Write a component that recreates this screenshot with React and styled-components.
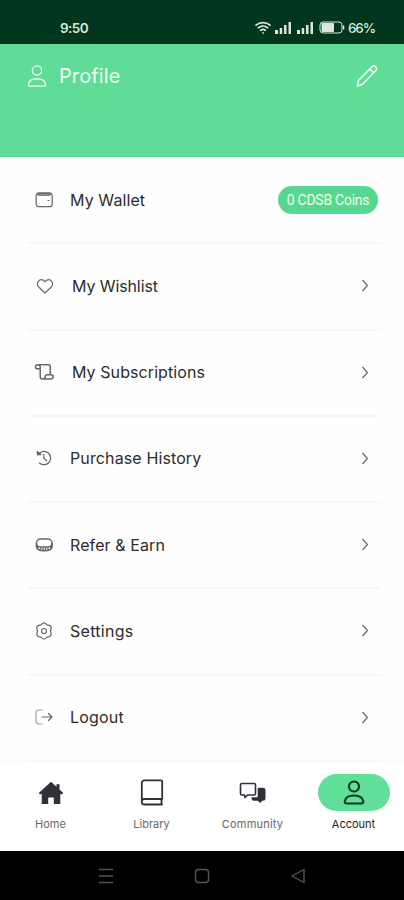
import styled, { createGlobalStyle } from "styled-components";

const GlobalStyle = createGlobalStyle`
    * {
        box-sizing: border-box;
    }

    body {
        margin: 0;
        background: #fefefe;
        font-family: Inter, "Open Sans", sans-serif;
        color: #222;
    }
`;

const Screen = styled.div`
    display: flex;
    flex-direction: column;
    width: 404px;
    height: 900px;
    overflow: hidden;
    background: #fefefe;
`;

const StatusBar = styled.div`
    display: flex;
    align-items: center;
    justify-content: space-between;
    flex: none;
    height: 44px;
    padding: 12px 30px 0 60px;
    background: #00361d;
    border-bottom: 1px solid #073518;
    color: #d9e8dc;
    line-height: 18px;
`;

const Clock = styled.span`
    font-weight: 600;
    font-size: 13.5px;
    letter-spacing: -0.6px;
`;

const StatusIcons = styled.div`
    display: flex;
    align-items: center;
`;

const Signals = styled.div`
    display: flex;
    gap: 5px;
    margin: 0 5px 0 4px;
`;

const Battery = styled.span`
    font-weight: 500;
    font-size: 13.5px;
    letter-spacing: -1.1px;
    margin: 0 -1px 0 3px;
`;

const Header = styled.header`
    display: flex;
    align-items: flex-start;
    flex: none;
    height: 113px;
    padding: 20px 26px 0 26px;
    background: #5fdd97;
    border-bottom: 1px solid #58d58f;
    color: #effff3;
`;

const HeaderTitle = styled.h1`
    flex: 1;
    margin: 0 0 0 11px;
    font-size: 20px;
    font-weight: 400;
    line-height: 25px;
    letter-spacing: 0.1px;
`;

const Menu = styled.ul`
    flex: none;
    height: 603.75px;
    margin: 0 23px 0 28px;
    padding: 0;
    list-style: none;
`;

const MenuRow = styled.li`
    display: flex;
    align-items: center;
    height: 86.25px;
    padding: 0 3px 1px 6px;
    box-shadow: 0 1px #f7f7f7, inset 0 -1px #f7f7f7;
    color: #666;
`;

const MenuLabel = styled.span`
    flex: 1;
    margin-left: ${({ $indent }) => $indent || "16px"};
    font-size: 16px;
    line-height: 24px;
    color: #2c2c2c;
    letter-spacing: ${({ $track }) => $track || "0"};
`;

const Coins = styled.span`
    height: 28px;
    width: 100px;
    border-radius: 14px;
    background: #58d790;
    color: #efffea;
    font-family: Roboto, sans-serif;
    font-size: 14px;
    line-height: 29px;
    letter-spacing: -0.25px;
    text-align: center;
    white-space: nowrap;
`;

const Chevron = styled.svg`
    width: 8px;
    height: 13px;
    margin-right: 9px;
`;

const TabBar = styled.nav`
    display: grid;
    grid-template-columns: repeat(4, 1fr);
    flex: none;
    height: 90.25px;
    padding-top: 12.5px;
    background: #fff;
    border-top: 1px solid #f6f6f6;
`;

const Tab = styled.div`
    display: flex;
    flex-direction: column;
    align-items: center;
`;

const TabIcon = styled.div`
    display: flex;
    align-items: center;
    justify-content: center;
    width: 72px;
    height: 36.5px;
    border-radius: 19px;
    background: ${({ $active }) => $active ? "#5fdf97" : "transparent"};
    color: ${({ $active }) => $active ? "#0c3422" : "#303039"};
`;

const TabLabel = styled.span`
    margin-top: 6px;
    font-size: 11px;
    line-height: 15px;
    letter-spacing: ${({ $track }) => $track || "0"};
    color: ${({ $active }) => $active ? "#222" : "#666"};
`;

const SystemBar = styled.div`
    display: flex;
    align-items: center;
    justify-content: center;
    flex: 1;
    gap: 80px;
    background: #000;
    color: #555;
`;

function Icon({ size = 20, width = size, height = size, box = "0 0 20 20", weight = 1.2, children })
{
    return(
        <svg
            width={width}
            height={height}
            viewBox={box}
            fill="none"
            stroke="currentColor"
            strokeWidth={weight}
            strokeLinecap="round"
            strokeLinejoin="round"
        >
            {children}
        </svg>
    );
}

function PersonIcon({ weight, height = 26 })
{
    return(
        <Icon width={22} height={height} box="0 0 22 26" weight={weight}>
            <circle cx="11" cy="7" r="5" />
            <path d="M4 24h14c1.7 0 2.5-.8 2.3-2-.6-3.8-4-6-9.3-6s-8.7 2.2-9.3 6c-.2 1.2.6 2 2.3 2z" />
        </Icon>
    );
}

function Signal()
{
    return(
        <svg width="17" height="13" viewBox="0 0 17 13" fill="currentColor">
            <path d="M0 9h3v4H0zM4.7 7h2.5v6H4.7zM9 4h2.5v9H9zM13.5 1h2.5v12h-2.5z" />
        </svg>
    );
}

const items = [
    {
        label: "My Wallet",
        track: "0.1px",
        coins: "0 CDSB Coins",
        icon: <>
            <rect x="2.2" y="3.2" width="16" height="13.5" rx="2.5" />
            <path d="M4 3.2h12v2H5c-1 0-1.6-.8-1.6-1.6" fill="currentColor" fillOpacity=".5" />
            <path d="M14 10.5h1" />
        </>
    },
    {
        label: "My Wishlist",
        indent: "18px",
        track: "-0.1px",
        icon: <path d="M11 17L5 11.3C1.2 7.5 5.4 1.8 9.8 4.6L11 5.7l1.2-1.1c4.4-2.8 8.6 2.9 4.8 6.7z" />
    },
    {
        label: "My Subscriptions",
        indent: "18px",
        track: "0.08px",
        icon: <>
            <path d="M4.5 2.8h10c1.3 0 1.8.7 1.8 2v8M6.2 7.5v7c0 1.5 1 2.5 2.3 2.5h7.5c2 0 3.2-1 3.2-2.3s-1.300-1.900-3-1.900h-2.500c-1.500 0-2.500.6-2.500 1.900 0 1.300-1 2.300-2.300 2.300" />
            <path d="M4 2.8c-2 0-2.5 1-2.5 2.2s.8 1.8 2 1.8h2.700V5C6.200 3.600 5.300 2.800 4 2.800z" />
        </>,
        weight: 1.5
    },
    {
        label: "Purchase History",
        track: "0.12px",
        icon: <>
            <path d="M5 5.5A6.7 6.7 0 1 1 5.5 15" />
            <path d="M3.2 3.5l.3 3.5 3.5-.5z" fill="currentColor" />
            <path d="M9.8 6.3v4l3 2.600" />
        </>
    },
    {
        label: "Refer & Earn",
        track: "0.1px",
        icon: <>
            <rect x="2.5" y="4" width="15.5" height="8" rx="4" />
            <path d="M2.3 8.5v2.500c0 3.400 3.500 4.800 8 4.800s8-1.400 8-4.800v-2.500" />
            <path d="M3.5 11.5v1.500M17 11.500v1.500" strokeWidth="2" />
            <path d="M6.5 13v1.500M9 13v2M11.500 13v2M14 13v1.500" />
        </>,
        weight: 1.4
    },
    {
        label: "Settings",
        track: "0.28px",
        icon: <>
            <path d="M8.3 2.6c1-.8 2.4-.8 3.4 0l1.300 1.300 2.200.5c1.400.4 2.200 1.500 1.900 2.900L16.500 10l.6 2.700c.3 1.400-.5 2.500-1.900 2.900l-2.200.5-1.300 1.300c-1 .8-2.400.8-3.400 0L7 16.100l-2.200-.5c-1.400-.4-2.200-1.500-1.900-2.900l.6-2.700-.6-2.700c-.3-1.400.5-2.500 1.900-2.900L7 3.900z" />
            <circle cx="10" cy="10" r="2.5" />
        </>
    },
    {
        label: "Logout",
        track: "0.2px",
        icon: <>
            <path d="M8 3H5C3 3 2 4 2 6v8c0 2 1 3 3 3h3" strokeOpacity=".6" />
            <path d="M8 10h10M14.5 6.5L18 10l-3.5 3.5" />
        </>
    }
];

export default function App()
{
    return(
        <Screen>
            <GlobalStyle />
            <StatusBar>
                <Clock>9:50</Clock>
                <StatusIcons>
                    <Icon width={16} height={14} box="0 0 16 14" weight={1.7}>
                        <path d="M1 4.200c4-3.400 10-3.400 14 0M3.300 6.800c2.700-2.200 6.700-2.200 9.400 0M5.700 9.300c1.400-1.100 3.200-1.100 4.600 0M8 11.800v.2" />
                    </Icon>
                    <Signals>
                        <Signal />
                        <Signal />
                    </Signals>
                    <svg width="26" height="13" viewBox="0 0 26 13" fill="none" stroke="currentColor">
                        <rect x="1" y="1" width="22" height="11" rx="3" />
                        <rect x="2.5" y="2" width="12.5" height="9" rx="1" fill="currentColor" stroke="none" />
                        <path d="M24.5 4.5v4" strokeWidth="1.5" />
                    </svg>
                    <Battery>66%</Battery>
                </StatusIcons>
            </StatusBar>
            <Header>
                <PersonIcon weight={1.5} height={24} />
                <HeaderTitle>Profile</HeaderTitle>
                <Icon width={22} height={24} box="0 0 22 24" weight={1.6}>
                    <path d="M1.3 22l1.2-5.6L15.8 2.9c2.9-2.5 6.3 1 3.9 3.9L6.5 20.2zM13.8 5l3.8 3.9" />
                </Icon>
            </Header>
            <Menu>
                {items.map(({ label, indent, track, coins, icon, weight }) => (
                    <MenuRow key={label}>
                        <Icon weight={weight}>{icon}</Icon>
                        <MenuLabel $indent={indent} $track={track}>{label}</MenuLabel>
                        {coins ? <Coins>{coins}</Coins> :
                            <Chevron viewBox="0 0 8 13" fill="none" stroke="currentColor" strokeWidth="1.2">
                                <path d="M1.5 1l5 5.5-5 5.5" />
                            </Chevron>}
                    </MenuRow>
                ))}
            </Menu>
            <TabBar>
                <Tab>
                    <TabIcon>
                        <svg width="26" height="24" viewBox="0 0 26 24" fill="currentColor">
                            <path d="M13 .8L.8 12l1.2 1.6 1.7-.8V23h6.500v-6.500h5.600V23h6.500V12.800l1.700.8 1.200-1.600-3.700-3.400V3.300h-3v2.500z" />
                        </svg>
                    </TabIcon>
                    <TabLabel>Home</TabLabel>
                </Tab>
                <Tab>
                    <TabIcon>
                        <Icon width={24} height={27} box="0 0 24 27" weight={1.8}>
                            <path d="M22 20H4.500C.6 20 .8 25.500 4.500 25.500H22M1.800 23V4c0-1.700 1-2.700 2.700-2.700H21c.7 0 1.200.5 1.200 1.200V20M21.500 20v5.500" />
                        </Icon>
                    </TabIcon>
                    <TabLabel>Library</TabLabel>
                </Tab>
                <Tab>
                    <TabIcon>
                        <Icon width={27} height={21} box="0 0 27 21" weight={1.6}>
                            <path d="M3 1.500h12c1 0 1.500.5 1.500 1.500v8.500c0 1-.5 1.500-1.500 1.500H8.500L6 15.500 5.500 13H3c-1 0-1.500-.5-1.500-1.500V3c0-1 .5-1.500 1.500-1.500z" />
                            <path d="M19.500 6.500H24c1.200 0 1.700.5 1.700 1.500v8.500c0 1-.5 1.500-1.700 1.500h-1.500L21.300 20l-2.500-2H15c-1 0-1.700-.8-1.700-2H18c1 0 1.500-.5 1.500-1.500z" fill="currentColor" />
                        </Icon>
                    </TabIcon>
                    <TabLabel $track="0.2px">Community</TabLabel>
                </Tab>
                <Tab>
                    <TabIcon $active>
                        <PersonIcon weight={2.2} height={27} />
                    </TabIcon>
                    <TabLabel $active>Account</TabLabel>
                </Tab>
            </TabBar>
            <SystemBar>
                <Icon size={16} box="0 0 16 16" weight={1.4}>
                    <path d="M1.500 1.500h13M1.500 8h13M1.500 14.500h13" />
                </Icon>
                <Icon size={16} box="0 0 16 16" weight={1.4}>
                    <rect x="1.5" y="1.5" width="13" height="13" rx="3" />
                </Icon>
                <Icon size={16} box="0 0 16 16" weight={1.4}>
                    <path d="M14 1.500v13L2 8z" />
                </Icon>
            </SystemBar>
        </Screen>
    );
}
